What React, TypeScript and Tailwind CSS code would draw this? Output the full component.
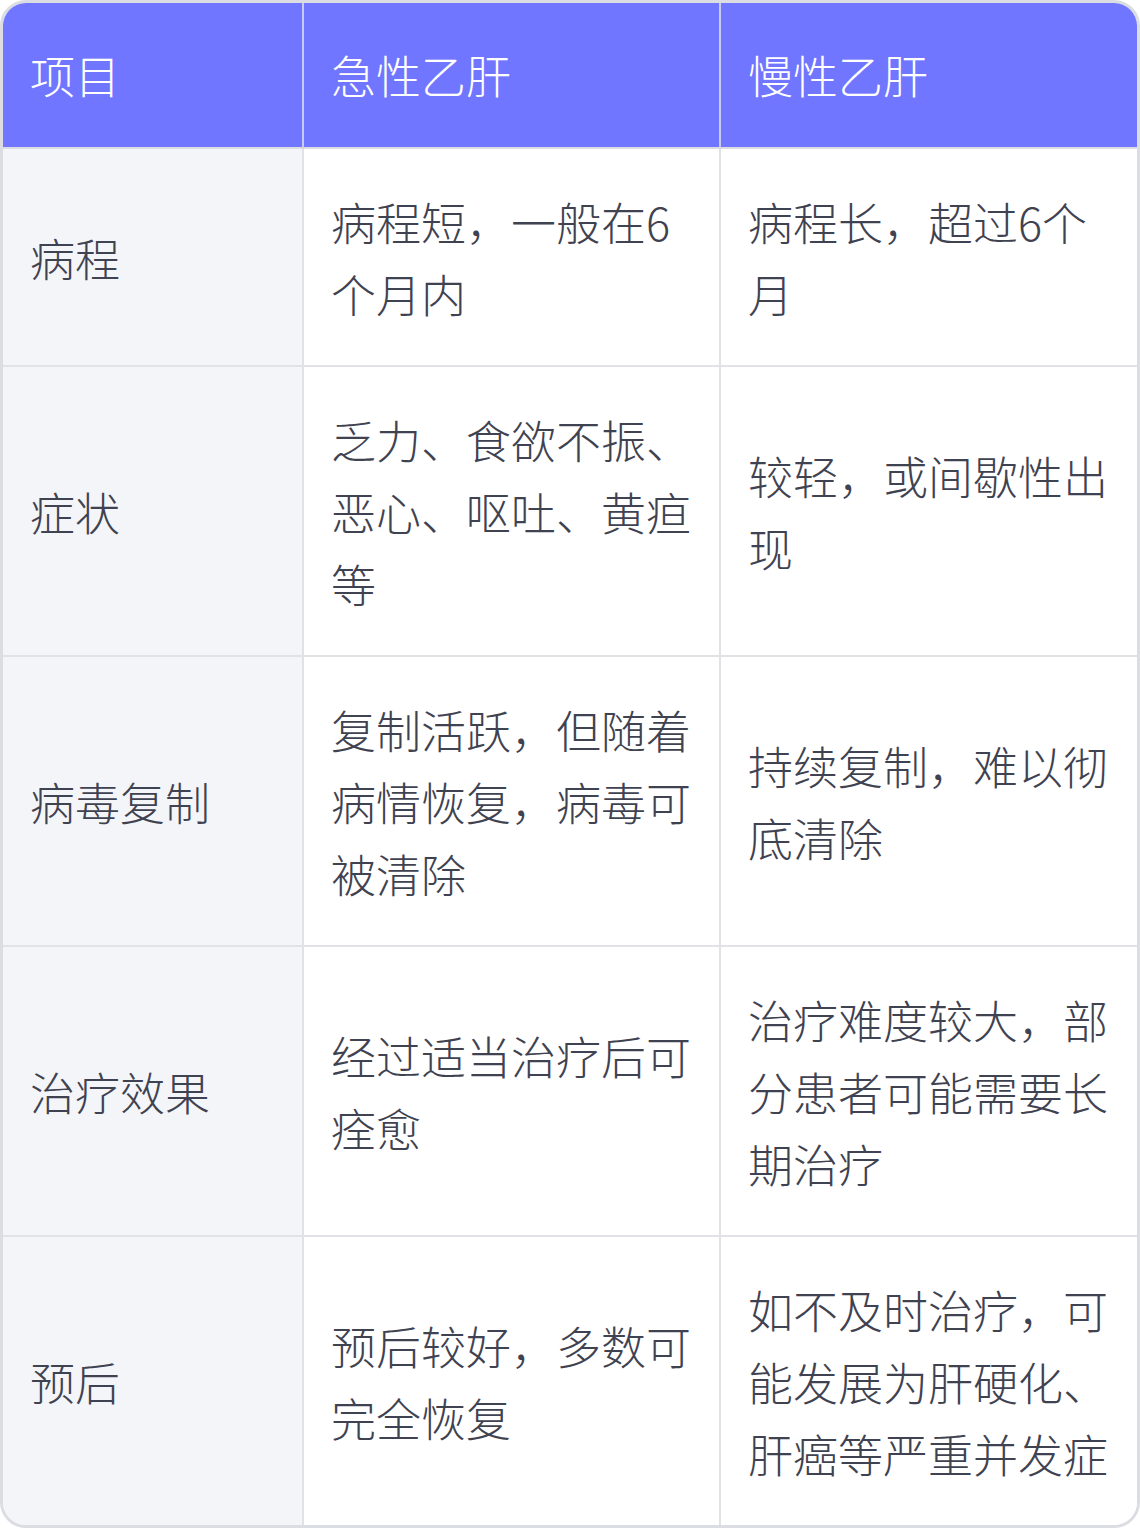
const rows: [string, string, string][] = [
  ["病程", "病程短，一般在6个月内", "病程长，超过6个月"],
  ["症状", "乏力、食欲不振、恶心、呕吐、黄疸等", "较轻，或间歇性出现"],
  ["病毒复制", "复制活跃，但随着病情恢复，病毒可被清除", "持续复制，难以彻底清除"],
  ["治疗效果", "经过适当治疗后可痊愈", "治疗难度较大，部分患者可能需要长期治疗"],
  ["预后", "预后较好，多数可完全恢复", "如不及时治疗，可能发展为肝硬化、肝癌等严重并发症"],
];

const font = "font-['Noto_Sans_CJK_SC','Noto_Sans',sans-serif]";

export default function App() {
  return (
    <div className={`w-[1140px] bg-white ${font} font-light`}>
      <div className="overflow-hidden rounded-[26px] border-[3px] border-[#dcdde2]">
        <div className="grid grid-cols-[301px_417px_1fr] text-[45px] leading-[72px]">
          {["项目", "急性乙肝", "慢性乙肝"].map((h, i) => (
            <div
              key={h}
              className={`flex h-[146px] items-center border-b-2 border-[#dcdde2] bg-[#7076ff] pl-[27px] pr-[25px] text-white ${
                i < 2 ? "border-r-2 border-r-[#c9cbf0]" : ""
              }`}
            >
              {h}
            </div>
          ))}
          {rows.map((r, ri) => (
            <Row key={r[0]} cells={r} last={ri === rows.length - 1} />
          ))}
        </div>
      </div>
    </div>
  );
}

function Row({ cells, last }: { cells: [string, string, string]; last: boolean }) {
  return (
    <>
      {cells.map((c, i) => (
        <div
          key={i}
          className={`flex items-center pt-[37px] pb-[35px] pl-[27px] pr-[25px] text-[#3f4250] ${
            last ? "" : "border-b-2 border-[#e1e2e6]"
          } ${i < 2 ? "border-r-2 border-r-[#e1e2e6]" : ""} ${i === 0 ? "bg-[#f4f5f9]" : "bg-white"}`}
        >
          {c}
        </div>
      ))}
    </>
  );
}
